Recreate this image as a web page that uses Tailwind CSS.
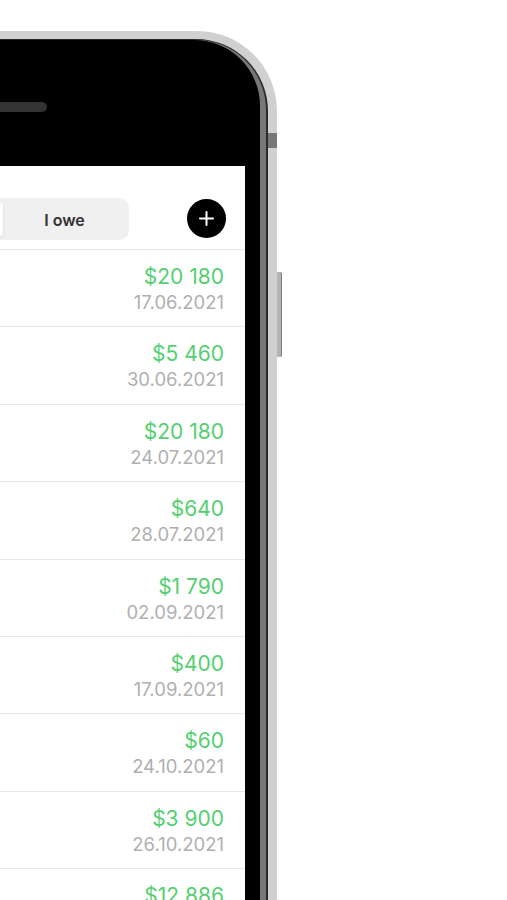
<!DOCTYPE html>
<html lang="en">

<head>
    <meta charset="UTF-8">
    <meta name="viewport" content="width=device-width, initial-scale=1.0">
    <title>Debts</title>
    <script src="https://cdn.jsdelivr.net/npm/@tailwindcss/browser@4"></script>
</head>

<body class="bg-white font-['Inter',sans-serif] h-screen overflow-hidden">
    <!-- Phone frame, cut off by the left and bottom of the page -->
    <div class="relative w-[277px] mt-[31px]">
        <div class="absolute left-[277px] top-[241px] w-[5px] h-[85px] rounded-r-[2px] bg-[#b4b4b4] border-r border-[#777]"></div>
        <div class="absolute left-[268px] top-[102px] w-[9px] h-[15px] bg-[#777]"></div>

        <div class="bg-[#d0d0d0] pt-[8px] pr-[9px] rounded-tr-[80px]">
            <div class="bg-[#2a2a2a] pt-[1px] pr-[2px] rounded-tr-[72px]">
                <div class="bg-[#777] pr-[6px] rounded-tr-[70px]">
                    <div class="bg-black pr-[15px] pt-[62px] rounded-tr-[66px] h-[900px]">
                        <div class="w-[47px] h-[10px] bg-[#333] rounded-r-full"></div>

                        <!-- Screen -->
                        <div class="bg-white mt-[54px]">
                            <div class="flex items-start justify-between pt-[32px] pr-[19px] h-[84px] border-b border-[#e8e8e8]">
                                <div class="flex items-center w-[129px] h-[42px] bg-[#f0f0f0] rounded-r-[10px]">
                                    <div class="w-[3px] h-[33px] bg-white rounded-r-[3px] shadow-sm"></div>
                                    <div class="flex-1 pr-[3px] pt-[1px] text-center text-[16px] font-semibold text-[#333]">I owe</div>
                                </div>
                                <div class="flex items-center justify-center w-[39px] h-[39px] mt-[1px] rounded-full bg-black">
                                    <svg width="15" height="15" viewBox="0 0 15 15" fill="none" stroke="white" stroke-width="2" stroke-linecap="round">
                                        <path d="M7.5 1v13M1 7.5h13" />
                                    </svg>
                                </div>
                            </div>

                            <div class="h-[77.4px] pt-[14px] pr-[21px] text-right border-b border-[#e8e8e8]">
                                <div class="text-[21px] leading-[26px] text-[#55cf72]">$20 180</div>
                                <div class="text-[18.5px] leading-[24px] text-[#b0b0b0]">17.06.2021</div>
                            </div>
                            <div class="h-[77.4px] pt-[14px] pr-[21px] text-right border-b border-[#e8e8e8]">
                                <div class="text-[21px] leading-[26px] text-[#55cf72]">$5 460</div>
                                <div class="text-[18.5px] leading-[24px] text-[#b0b0b0]">30.06.2021</div>
                            </div>
                            <div class="h-[77.4px] pt-[14px] pr-[21px] text-right border-b border-[#e8e8e8]">
                                <div class="text-[21px] leading-[26px] text-[#55cf72]">$20 180</div>
                                <div class="text-[18.5px] leading-[24px] text-[#b0b0b0]">24.07.2021</div>
                            </div>
                            <div class="h-[77.4px] pt-[14px] pr-[21px] text-right border-b border-[#e8e8e8]">
                                <div class="text-[21px] leading-[26px] text-[#55cf72]">$640</div>
                                <div class="text-[18.5px] leading-[24px] text-[#b0b0b0]">28.07.2021</div>
                            </div>
                            <div class="h-[77.4px] pt-[14px] pr-[21px] text-right border-b border-[#e8e8e8]">
                                <div class="text-[21px] leading-[26px] text-[#55cf72]">$1 790</div>
                                <div class="text-[18.5px] leading-[24px] text-[#b0b0b0]">02.09.2021</div>
                            </div>
                            <div class="h-[77.4px] pt-[14px] pr-[21px] text-right border-b border-[#e8e8e8]">
                                <div class="text-[21px] leading-[26px] text-[#55cf72]">$400</div>
                                <div class="text-[18.5px] leading-[24px] text-[#b0b0b0]">17.09.2021</div>
                            </div>
                            <div class="h-[77.4px] pt-[14px] pr-[21px] text-right border-b border-[#e8e8e8]">
                                <div class="text-[21px] leading-[26px] text-[#55cf72]">$60</div>
                                <div class="text-[18.5px] leading-[24px] text-[#b0b0b0]">24.10.2021</div>
                            </div>
                            <div class="h-[77.4px] pt-[14px] pr-[21px] text-right border-b border-[#e8e8e8]">
                                <div class="text-[21px] leading-[26px] text-[#55cf72]">$3 900</div>
                                <div class="text-[18.5px] leading-[24px] text-[#b0b0b0]">26.10.2021</div>
                            </div>
                            <div class="h-[31px] overflow-hidden pt-[14px] pr-[21px] text-right">
                                <div class="text-[21px] leading-[26px] text-[#55cf72]">$12 886</div>
                            </div>
                        </div>
                    </div>
                </div>
            </div>
        </div>
    </div>
</body>

</html>
